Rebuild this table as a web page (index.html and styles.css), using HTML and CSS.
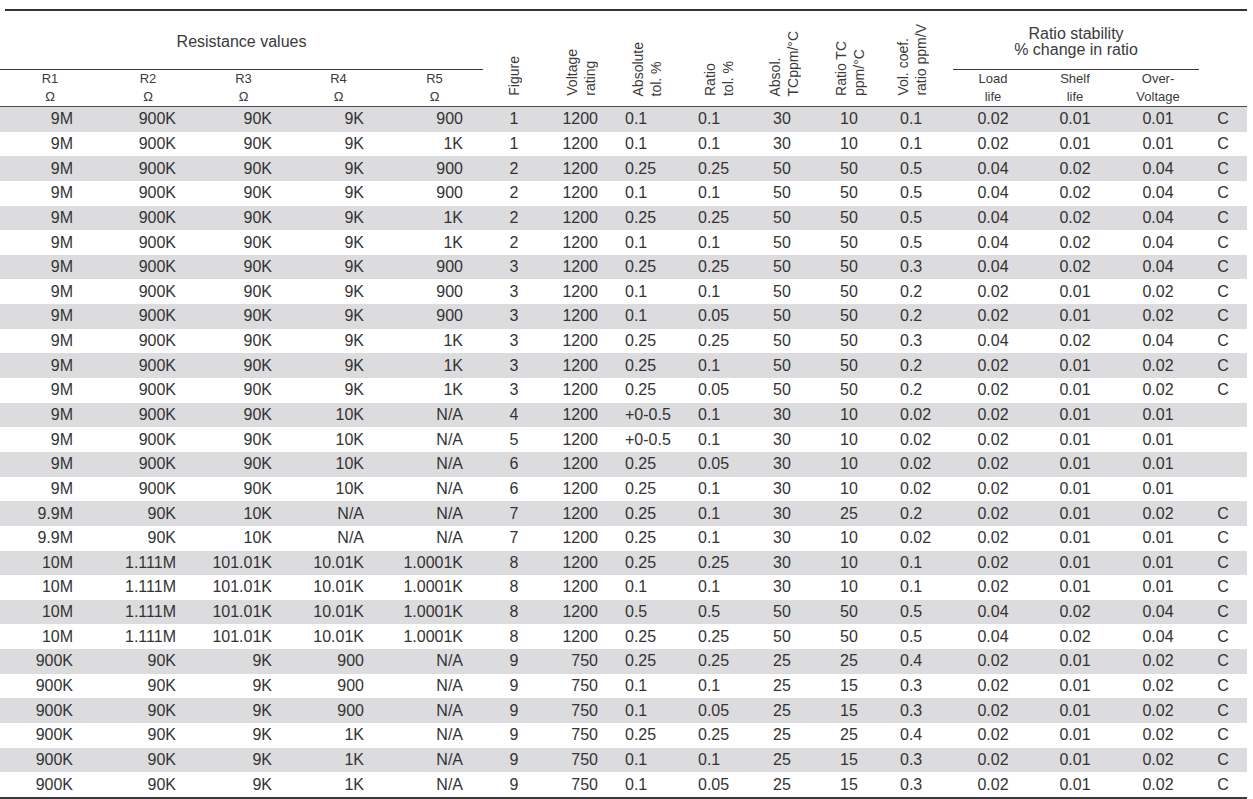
FILE: index.html
```html
<!DOCTYPE html>
<html lang="en">
<head>
<meta charset="utf-8">
<title>Resistor network table</title>
<link rel="stylesheet" href="styles.css">
</head>
<body>
<div class="sheet">
  <div class="rule-top"></div>
  <table class="spec">
    <colgroup>
      <col class="w100"><col class="w96"><col class="w95"><col class="w95"><col class="w97">
      <col class="w62"><col class="w70"><col class="w73"><col class="w70"><col class="w67">
      <col class="w63"><col class="w65"><col class="w80"><col class="w84"><col class="w82"><col class="w48">
    </colgroup>
    <thead>
      <tr class="hA">
        <th colspan="5" class="group">Resistance values</th>
        <th rowspan="2" class="rot c-fig"><div class="vt">Figure</div></th>
        <th rowspan="2" class="rot c-volt"><div class="vt">Voltage<br>rating</div></th>
        <th rowspan="2" class="rot c-abs"><div class="vt">Absolute<br>tol. %</div></th>
        <th rowspan="2" class="rot c-rtol"><div class="vt">Ratio<br>tol. %</div></th>
        <th rowspan="2" class="rot c-atc"><div class="vt">Absol.<br>TCppm/°C</div></th>
        <th rowspan="2" class="rot c-rtc"><div class="vt">Ratio TC<br>ppm/°C</div></th>
        <th rowspan="2" class="rot c-vc"><div class="vt">Vol. coef.<br>ratio ppm/V</div></th>
        <th colspan="3" class="group">Ratio stability<br>% change in ratio</th>
        <th rowspan="2" class="rot"></th>
      </tr>
      <tr class="hB">
        <th>R1<br>Ω</th><th>R2<br>Ω</th><th>R3<br>Ω</th><th>R4<br>Ω</th><th>R5<br>Ω</th>
        <th>Load<br>life</th><th>Shelf<br>life</th><th>Over-<br>Voltage</th>
      </tr>
    </thead>
    <tbody>
      <tr><td>9M</td><td>900K</td><td>90K</td><td>9K</td><td>900</td><td>1</td><td>1200</td><td>0.1</td><td>0.1</td><td>30</td><td>10</td><td>0.1</td><td>0.02</td><td>0.01</td><td>0.01</td><td>C</td></tr>
      <tr><td>9M</td><td>900K</td><td>90K</td><td>9K</td><td>1K</td><td>1</td><td>1200</td><td>0.1</td><td>0.1</td><td>30</td><td>10</td><td>0.1</td><td>0.02</td><td>0.01</td><td>0.01</td><td>C</td></tr>
      <tr><td>9M</td><td>900K</td><td>90K</td><td>9K</td><td>900</td><td>2</td><td>1200</td><td>0.25</td><td>0.25</td><td>50</td><td>50</td><td>0.5</td><td>0.04</td><td>0.02</td><td>0.04</td><td>C</td></tr>
      <tr><td>9M</td><td>900K</td><td>90K</td><td>9K</td><td>900</td><td>2</td><td>1200</td><td>0.1</td><td>0.1</td><td>50</td><td>50</td><td>0.5</td><td>0.04</td><td>0.02</td><td>0.04</td><td>C</td></tr>
      <tr><td>9M</td><td>900K</td><td>90K</td><td>9K</td><td>1K</td><td>2</td><td>1200</td><td>0.25</td><td>0.25</td><td>50</td><td>50</td><td>0.5</td><td>0.04</td><td>0.02</td><td>0.04</td><td>C</td></tr>
      <tr><td>9M</td><td>900K</td><td>90K</td><td>9K</td><td>1K</td><td>2</td><td>1200</td><td>0.1</td><td>0.1</td><td>50</td><td>50</td><td>0.5</td><td>0.04</td><td>0.02</td><td>0.04</td><td>C</td></tr>
      <tr><td>9M</td><td>900K</td><td>90K</td><td>9K</td><td>900</td><td>3</td><td>1200</td><td>0.25</td><td>0.25</td><td>50</td><td>50</td><td>0.3</td><td>0.04</td><td>0.02</td><td>0.04</td><td>C</td></tr>
      <tr><td>9M</td><td>900K</td><td>90K</td><td>9K</td><td>900</td><td>3</td><td>1200</td><td>0.1</td><td>0.1</td><td>50</td><td>50</td><td>0.2</td><td>0.02</td><td>0.01</td><td>0.02</td><td>C</td></tr>
      <tr><td>9M</td><td>900K</td><td>90K</td><td>9K</td><td>900</td><td>3</td><td>1200</td><td>0.1</td><td>0.05</td><td>50</td><td>50</td><td>0.2</td><td>0.02</td><td>0.01</td><td>0.02</td><td>C</td></tr>
      <tr><td>9M</td><td>900K</td><td>90K</td><td>9K</td><td>1K</td><td>3</td><td>1200</td><td>0.25</td><td>0.25</td><td>50</td><td>50</td><td>0.3</td><td>0.04</td><td>0.02</td><td>0.04</td><td>C</td></tr>
      <tr><td>9M</td><td>900K</td><td>90K</td><td>9K</td><td>1K</td><td>3</td><td>1200</td><td>0.25</td><td>0.1</td><td>50</td><td>50</td><td>0.2</td><td>0.02</td><td>0.01</td><td>0.02</td><td>C</td></tr>
      <tr><td>9M</td><td>900K</td><td>90K</td><td>9K</td><td>1K</td><td>3</td><td>1200</td><td>0.25</td><td>0.05</td><td>50</td><td>50</td><td>0.2</td><td>0.02</td><td>0.01</td><td>0.02</td><td>C</td></tr>
      <tr><td>9M</td><td>900K</td><td>90K</td><td>10K</td><td>N/A</td><td>4</td><td>1200</td><td>+0-0.5</td><td>0.1</td><td>30</td><td>10</td><td>0.02</td><td>0.02</td><td>0.01</td><td>0.01</td><td></td></tr>
      <tr><td>9M</td><td>900K</td><td>90K</td><td>10K</td><td>N/A</td><td>5</td><td>1200</td><td>+0-0.5</td><td>0.1</td><td>30</td><td>10</td><td>0.02</td><td>0.02</td><td>0.01</td><td>0.01</td><td></td></tr>
      <tr><td>9M</td><td>900K</td><td>90K</td><td>10K</td><td>N/A</td><td>6</td><td>1200</td><td>0.25</td><td>0.05</td><td>30</td><td>10</td><td>0.02</td><td>0.02</td><td>0.01</td><td>0.01</td><td></td></tr>
      <tr><td>9M</td><td>900K</td><td>90K</td><td>10K</td><td>N/A</td><td>6</td><td>1200</td><td>0.25</td><td>0.1</td><td>30</td><td>10</td><td>0.02</td><td>0.02</td><td>0.01</td><td>0.01</td><td></td></tr>
      <tr><td>9.9M</td><td>90K</td><td>10K</td><td>N/A</td><td>N/A</td><td>7</td><td>1200</td><td>0.25</td><td>0.1</td><td>30</td><td>25</td><td>0.2</td><td>0.02</td><td>0.01</td><td>0.02</td><td>C</td></tr>
      <tr><td>9.9M</td><td>90K</td><td>10K</td><td>N/A</td><td>N/A</td><td>7</td><td>1200</td><td>0.25</td><td>0.1</td><td>30</td><td>10</td><td>0.02</td><td>0.02</td><td>0.01</td><td>0.01</td><td>C</td></tr>
      <tr><td>10M</td><td>1.111M</td><td>101.01K</td><td>10.01K</td><td>1.0001K</td><td>8</td><td>1200</td><td>0.25</td><td>0.25</td><td>30</td><td>10</td><td>0.1</td><td>0.02</td><td>0.01</td><td>0.01</td><td>C</td></tr>
      <tr><td>10M</td><td>1.111M</td><td>101.01K</td><td>10.01K</td><td>1.0001K</td><td>8</td><td>1200</td><td>0.1</td><td>0.1</td><td>30</td><td>10</td><td>0.1</td><td>0.02</td><td>0.01</td><td>0.01</td><td>C</td></tr>
      <tr><td>10M</td><td>1.111M</td><td>101.01K</td><td>10.01K</td><td>1.0001K</td><td>8</td><td>1200</td><td>0.5</td><td>0.5</td><td>50</td><td>50</td><td>0.5</td><td>0.04</td><td>0.02</td><td>0.04</td><td>C</td></tr>
      <tr><td>10M</td><td>1.111M</td><td>101.01K</td><td>10.01K</td><td>1.0001K</td><td>8</td><td>1200</td><td>0.25</td><td>0.25</td><td>50</td><td>50</td><td>0.5</td><td>0.04</td><td>0.02</td><td>0.04</td><td>C</td></tr>
      <tr><td>900K</td><td>90K</td><td>9K</td><td>900</td><td>N/A</td><td>9</td><td>750</td><td>0.25</td><td>0.25</td><td>25</td><td>25</td><td>0.4</td><td>0.02</td><td>0.01</td><td>0.02</td><td>C</td></tr>
      <tr><td>900K</td><td>90K</td><td>9K</td><td>900</td><td>N/A</td><td>9</td><td>750</td><td>0.1</td><td>0.1</td><td>25</td><td>15</td><td>0.3</td><td>0.02</td><td>0.01</td><td>0.02</td><td>C</td></tr>
      <tr><td>900K</td><td>90K</td><td>9K</td><td>900</td><td>N/A</td><td>9</td><td>750</td><td>0.1</td><td>0.05</td><td>25</td><td>15</td><td>0.3</td><td>0.02</td><td>0.01</td><td>0.02</td><td>C</td></tr>
      <tr><td>900K</td><td>90K</td><td>9K</td><td>1K</td><td>N/A</td><td>9</td><td>750</td><td>0.25</td><td>0.25</td><td>25</td><td>25</td><td>0.4</td><td>0.02</td><td>0.01</td><td>0.02</td><td>C</td></tr>
      <tr><td>900K</td><td>90K</td><td>9K</td><td>1K</td><td>N/A</td><td>9</td><td>750</td><td>0.1</td><td>0.1</td><td>25</td><td>15</td><td>0.3</td><td>0.02</td><td>0.01</td><td>0.02</td><td>C</td></tr>
      <tr><td>900K</td><td>90K</td><td>9K</td><td>1K</td><td>N/A</td><td>9</td><td>750</td><td>0.1</td><td>0.05</td><td>25</td><td>15</td><td>0.3</td><td>0.02</td><td>0.01</td><td>0.02</td><td>C</td></tr>
    </tbody>
  </table>
  <div class="rule-bottom"></div>
</div>
</body>
</html>
```
FILE: styles.css
```css
html, body {
  margin: 0;
  padding: 0;
  background: #ffffff;
}

body {
  font-family: "Liberation Sans", Arial, sans-serif;
  color: #333333;
}

.sheet {
  width: 1247px;
  padding-top: 9px;
}

.rule-top {
  margin-left: 5px;
  border-top: 2px solid #333333;
}

.rule-bottom {
  border-top: 2px solid #3a3a3a;
}

.spec {
  width: 1247px;
  table-layout: fixed;
  border-collapse: separate;
  border-spacing: 0;
}

.w100 { width: 100px; }
.w96 { width: 96px; }
.w95 { width: 95px; }
.w97 { width: 97px; }
.w62 { width: 62px; }
.w70 { width: 70px; }
.w73 { width: 73px; }
.w67 { width: 67px; }
.w63 { width: 63px; }
.w65 { width: 65px; }
.w80 { width: 80px; }
.w84 { width: 84px; }
.w82 { width: 82px; }
.w48 { width: 48px; }

.spec th {
  padding: 0;
  font-weight: normal;
  color: #3a3a3a;
  white-space: nowrap;
}

.hA { height: 59px; }
.hB { height: 35px; }

.hA .group {
  font-size: 16px;
  line-height: 16px;
  text-align: center;
  vertical-align: middle;
  padding-top: 4px;
  border-bottom: 1px solid #3a3a3a;
}

.hB th {
  font-size: 13px;
  line-height: 18px;
  text-align: center;
  vertical-align: middle;
  border-bottom: 1px solid #4a4a4a;
}

.hA .rot {
  vertical-align: bottom;
  text-align: left;
  padding-bottom: 6px;
  border-bottom: 1px solid #4a4a4a;
}

.vt {
  display: inline-block;
  writing-mode: vertical-rl;
  transform: rotate(180deg);
  font-size: 14px;
  line-height: 18px;
  text-align: start;
  white-space: nowrap;
}

.hA .c-fig { text-align: center; }
.hA .c-volt { padding-left: 18px; }
.hA .c-abs { padding-left: 14px; }
.hA .c-rtol { padding-left: 13px; }
.hA .c-atc { padding-left: 8px; }
.hA .c-rtc { padding-left: 7px; }
.hA .c-vc { padding-left: 6px; }

.spec tbody tr { height: 24.65px; }

.spec tbody tr:nth-child(odd) td {
  background: #dcdcde;
}

.spec td {
  padding: 0;
  font-size: 16px;
  line-height: 18px;
  vertical-align: middle;
  white-space: nowrap;
  color: #333333;
}

.spec td:nth-child(1) { text-align: right; padding-right: 27px; }
.spec td:nth-child(2) { text-align: right; padding-right: 20px; }
.spec td:nth-child(3) { text-align: right; padding-right: 19px; }
.spec td:nth-child(4) { text-align: right; padding-right: 22px; }
.spec td:nth-child(5) { text-align: right; padding-right: 20px; }
.spec td:nth-child(6) { text-align: center; }
.spec td:nth-child(7) { text-align: right; padding-right: 17px; }
.spec td:nth-child(8) { text-align: left; padding-left: 10px; }
.spec td:nth-child(9) { text-align: left; padding-left: 10px; }
.spec td:nth-child(10) { text-align: left; padding-left: 15px; }
.spec td:nth-child(11) { text-align: left; padding-left: 15px; }
.spec td:nth-child(12) { text-align: left; padding-left: 12px; }
.spec td:nth-child(13),
.spec td:nth-child(14),
.spec td:nth-child(15),
.spec td:nth-child(16) { text-align: center; }
```
